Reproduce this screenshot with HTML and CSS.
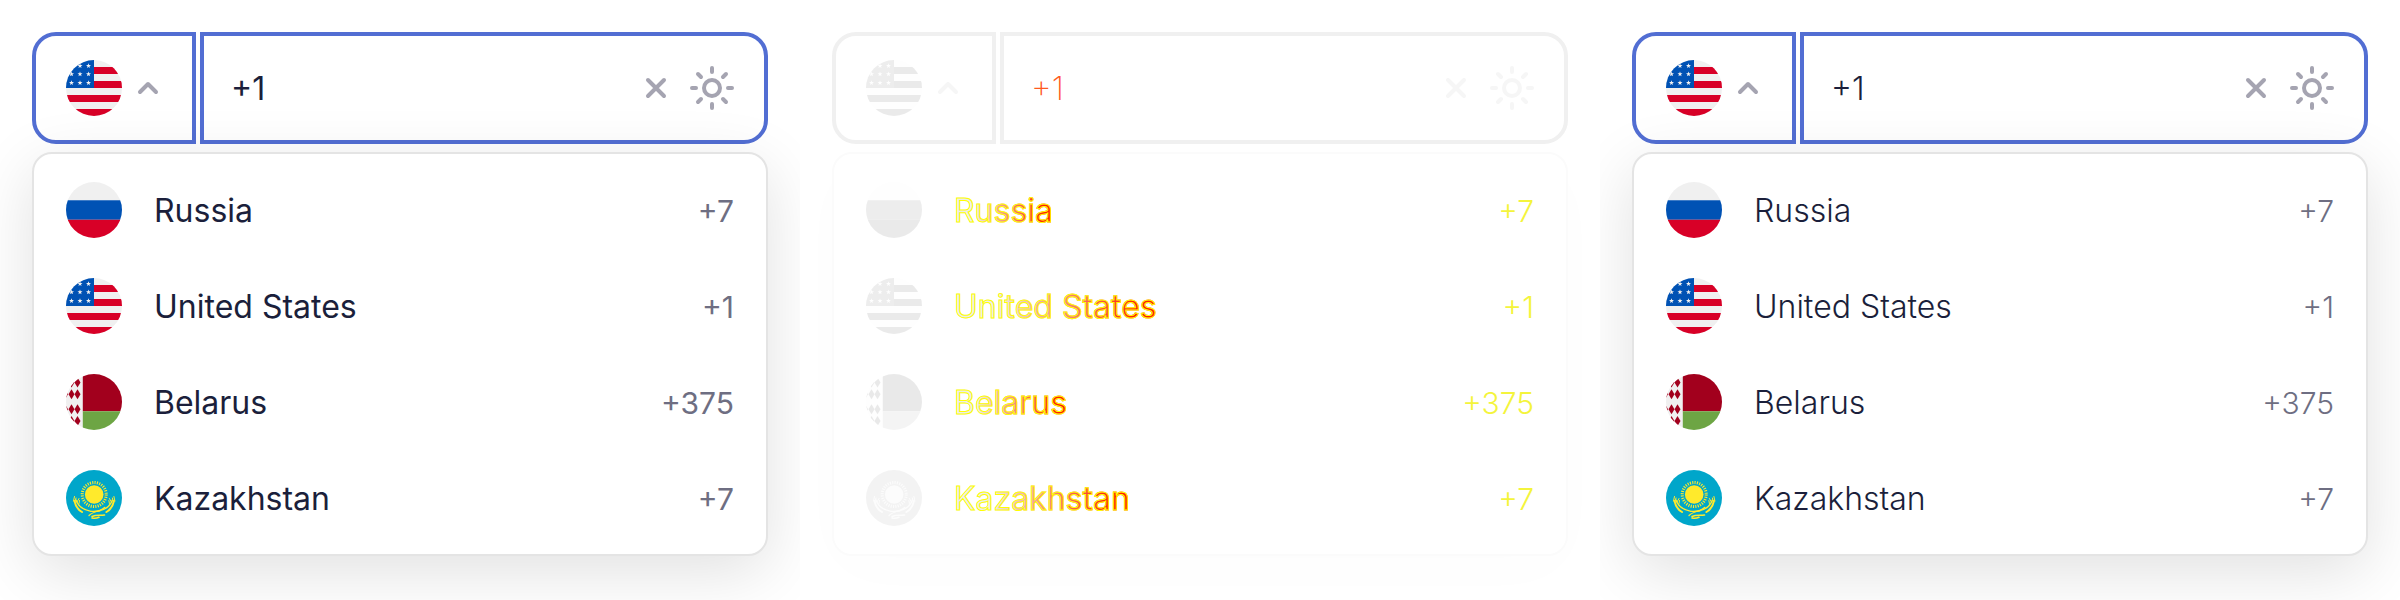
FILE: index.html
```html
<!DOCTYPE html>
<html lang="en">
<head>
<meta charset="utf-8">
<meta name="viewport" content="width=device-width, initial-scale=1">
<title>Phone input</title>
<link rel="stylesheet" href="styles.css">
</head>
<body>
<svg class="sprite" aria-hidden="true">
  <symbol id="us" viewBox="0 0 56 56">
    <path fill="#f0f0f0" d="M0 0h56v56H0z"/>
    <path fill="#d80027" d="M28 7h28v7H28zM28 21h28v7H28zM0 35h56v7H0zM0 49h56v7H0z"/>
    <path fill="#0052b4" d="M0 0h28v28H0z"/>
    <g fill="#f0f0f0">
      <path id="star" d="M14 3.200l.65 1.800h1.850l-1.500 1.150.55 1.850-1.550-1.100-1.550 1.100.55-1.850-1.500-1.150h1.850z"/>
      <use href="#star" x="8.500"/>
      <use href="#star" x="-8.500" y="8.300"/><use href="#star" y="8.300"/><use href="#star" x="8.500" y="8.300"/>
      <use href="#star" x="-8.500" y="17"/><use href="#star" y="17"/><use href="#star" x="8.500" y="17"/>
    </g>
  </symbol>
  <symbol id="ru" viewBox="0 0 56 56">
    <path fill="#f0f0f0" d="M0 0h56v18.200H0z"/>
    <path fill="#0052b4" d="M0 18.200h56v19.500H0z"/>
    <path fill="#d80027" d="M0 37.700h56V56H0z"/>
  </symbol>
  <symbol id="by" viewBox="0 0 56 56">
    <path fill="#f0f0f0" d="M0 0h17v56H0z"/>
    <path fill="#a2001d" d="M16.800 0H56v37.300H16.800z"/>
    <path fill="#6da544" d="M16.800 37.300H56V56H16.800z"/>
    <g fill="#a2001d">
      <path id="dia" d="M11.500 3.500l3 5-3 5-3-5z"/>
      <use href="#dia" x="-6"/>
      <use href="#dia" y="11.800"/><use href="#dia" x="-6" y="11.800"/><use href="#dia" x="-12.500" y="11.800"/>
      <use href="#dia" y="26.700"/><use href="#dia" x="-6" y="26.700"/><use href="#dia" x="-12.500" y="26.700"/>
      <use href="#dia" y="38.500"/><use href="#dia" x="-6" y="38.500"/>
    </g>
  </symbol>
  <symbol id="kz" viewBox="0 0 56 56">
    <path fill="#00a6ca" d="M0 0h56v56H0z"/>
    <circle cx="28.200" cy="24.500" r="9.300" fill="#ffea2c"/>
    <circle cx="28.200" cy="24.500" r="12" fill="none" stroke="#ffea2c" stroke-width="3" stroke-dasharray="1.100 1.256"/>
    <g fill="none" stroke="#ffea2c" stroke-linecap="round">
      <g id="wing">
        <path stroke-width="1.300" d="M10 30c2 6 7 10 15 11.300"/>
        <path stroke-width="2" d="M8.500 31c1 5 3 8.500 7.500 11"/>
        <path stroke-width="1" d="M7.500 31l1-4.500M9 32l1-4M11 32l2-3.500M13 33.500l.5-3"/>
      </g>
      <use href="#wing" transform="matrix(-1 0 0 1 56.400 0)"/>
      <path stroke-width="1.200" d="M25 41.300c5 .6 10-.5 14-4M23 45.500c3-3 7-4 11-4.500"/>
      <path stroke-width="1.600" d="M26 46.500c4-1.800 8-.8 12.500-1.500M26 48c3 .7 5 .2 7-.7"/>
    </g>
  </symbol>
  <symbol id="chevron" viewBox="0 0 24 24"><path d="M4 16l8-8 8 8"/></symbol>
  <symbol id="cross" viewBox="0 0 24 24"><path d="M4 4l16 16M20 4L4 20"/></symbol>
  <symbol id="sun" viewBox="0 0 48 48">
    <circle cx="24" cy="24" r="8"/>
    <path d="M24 4v4M24 40v4M4 24h4M40 24h4M10 10l3 3M35 35l3 3M38 10l-3 3M13 35l-3 3"/>
  </symbol>
</svg>
<main class="board">
  <section class="panel">
    <div class="field">
      <button class="country" type="button" aria-label="Country: United States" aria-expanded="true">
        <svg class="flag"><use href="#us"/></svg><svg class="icon"><use href="#chevron"/></svg>
      </button>
      <div class="phone">
        <input class="number" type="tel" value="+1" aria-label="Phone number">
        <button class="action" type="button" aria-label="Clear"><svg class="icon"><use href="#cross"/></svg></button>
        <button class="action" type="button" aria-label="Theme"><svg class="icon icon-large"><use href="#sun"/></svg></button>
      </div>
    </div>
    <ul class="menu" role="listbox" aria-label="Countries">
      <li class="option" role="option"><svg class="flag"><use href="#ru"/></svg><span class="name">Russia</span><span class="code">+7</span></li>
      <li class="option" role="option"><svg class="flag"><use href="#us"/></svg><span class="name">United States</span><span class="code">+1</span></li>
      <li class="option" role="option"><svg class="flag"><use href="#by"/></svg><span class="name">Belarus</span><span class="code">+375</span></li>
      <li class="option" role="option"><svg class="flag"><use href="#kz"/></svg><span class="name">Kazakhstan</span><span class="code">+7</span></li>
    </ul>
  </section>
  <section class="panel diff">
    <div class="field">
      <button class="country" type="button" aria-label="Country: United States" aria-expanded="true">
        <svg class="flag"><use href="#us"/></svg><svg class="icon"><use href="#chevron"/></svg>
      </button>
      <div class="phone">
        <input class="number" type="tel" value="+1" aria-label="Phone number">
        <button class="action" type="button" aria-label="Clear"><svg class="icon"><use href="#cross"/></svg></button>
        <button class="action" type="button" aria-label="Theme"><svg class="icon icon-large"><use href="#sun"/></svg></button>
      </div>
    </div>
    <ul class="menu" role="listbox" aria-label="Countries">
      <li class="option" role="option"><svg class="flag"><use href="#ru"/></svg><span class="name">Russia</span><span class="code">+7</span></li>
      <li class="option" role="option"><svg class="flag"><use href="#us"/></svg><span class="name">United States</span><span class="code">+1</span></li>
      <li class="option" role="option"><svg class="flag"><use href="#by"/></svg><span class="name">Belarus</span><span class="code">+375</span></li>
      <li class="option" role="option"><svg class="flag"><use href="#kz"/></svg><span class="name">Kazakhstan</span><span class="code">+7</span></li>
    </ul>
  </section>
  <section class="panel light">
    <div class="field">
      <button class="country" type="button" aria-label="Country: United States" aria-expanded="true">
        <svg class="flag"><use href="#us"/></svg><svg class="icon"><use href="#chevron"/></svg>
      </button>
      <div class="phone">
        <input class="number" type="tel" value="+1" aria-label="Phone number">
        <button class="action" type="button" aria-label="Clear"><svg class="icon"><use href="#cross"/></svg></button>
        <button class="action" type="button" aria-label="Theme"><svg class="icon icon-large"><use href="#sun"/></svg></button>
      </div>
    </div>
    <ul class="menu" role="listbox" aria-label="Countries">
      <li class="option" role="option"><svg class="flag"><use href="#ru"/></svg><span class="name">Russia</span><span class="code">+7</span></li>
      <li class="option" role="option"><svg class="flag"><use href="#us"/></svg><span class="name">United States</span><span class="code">+1</span></li>
      <li class="option" role="option"><svg class="flag"><use href="#by"/></svg><span class="name">Belarus</span><span class="code">+375</span></li>
      <li class="option" role="option"><svg class="flag"><use href="#kz"/></svg><span class="name">Kazakhstan</span><span class="code">+7</span></li>
    </ul>
  </section>
</main>
</body>
</html>
```
FILE: styles.css
```css
* {
  box-sizing: border-box;
}

body {
  margin: 0;
  background: #fff;
  color: #1b1f3b;
  font: 400 32px/40px Inter, "Liberation Sans", sans-serif;
}

.sprite {
  position: absolute;
  width: 0;
  height: 0;
}

.board {
  display: grid;
  grid-template-columns: repeat(3, 1fr);
  min-height: 100vh;
}

.panel {
  --accent: #526ed3;
  --line: #e4e4e4;
  --shadow: rgba(0, 0, 0, 0.12);
  display: flex;
  flex-direction: column;
  gap: 8px;
  padding: 32px;
  overflow: hidden;
}

.field {
  display: flex;
  gap: 4px;
}

.country,
.phone {
  display: flex;
  align-items: center;
  height: 112px;
  border: 4px solid var(--accent);
  background: #fff;
}

.country {
  gap: 14px;
  padding: 0 32px 0 30px;
  border-radius: 24px 0 0 24px;
}

.phone {
  flex: 1;
  min-width: 0;
  gap: 20px;
  padding: 0 28px 0 27px;
  border-radius: 0 24px 24px 0;
}

.number {
  flex: 1;
  min-width: 0;
  padding: 2px 0 0;
  border: 0;
  outline: 0;
  background: none;
  color: inherit;
  font: inherit;
}

.action {
  display: flex;
  padding: 0;
  border: 0;
  background: none;
}

.flag {
  flex: none;
  width: 56px;
  height: 56px;
  border-radius: 50%;
}

.icon {
  flex: none;
  width: 24px;
  height: 24px;
  fill: none;
  stroke: #a5a4b1;
  stroke-width: 4;
  stroke-linecap: round;
  stroke-linejoin: round;
}

.icon-large {
  width: 48px;
  height: 48px;
}

.menu {
  position: relative;
  margin: 0;
  padding: 8px 32px;
  border: 2px solid var(--line);
  border-radius: 20px;
  background: #fff;
  box-shadow: 0 16px 64px var(--shadow);
  list-style: none;
}

.option {
  display: flex;
  align-items: center;
  gap: 32px;
  height: 96px;
}

.name,
.code {
  padding-top: 2px;
}

.code {
  margin-left: auto;
  color: #6e6e82;
  font-size: 30px;
}

.light {
  font-weight: 300;
}

.diff {
  --accent: #f0f0f0;
  --line: #fbfbfb;
  --shadow: rgba(0, 0, 0, 0.012);
}

.diff .flag,
.diff .icon {
  filter: grayscale(1) opacity(0.1);
}

.diff .number {
  color: #ff5a1e;
  font-weight: 200;
}

.diff .name {
  background: linear-gradient(90deg, #ececec 20%, #ff2000 90%);
  background-clip: text;
  color: transparent;
  -webkit-text-stroke: 1px #ffff00;
}

.diff .code {
  color: #f4f43c;
  font-weight: 300;
}
```
